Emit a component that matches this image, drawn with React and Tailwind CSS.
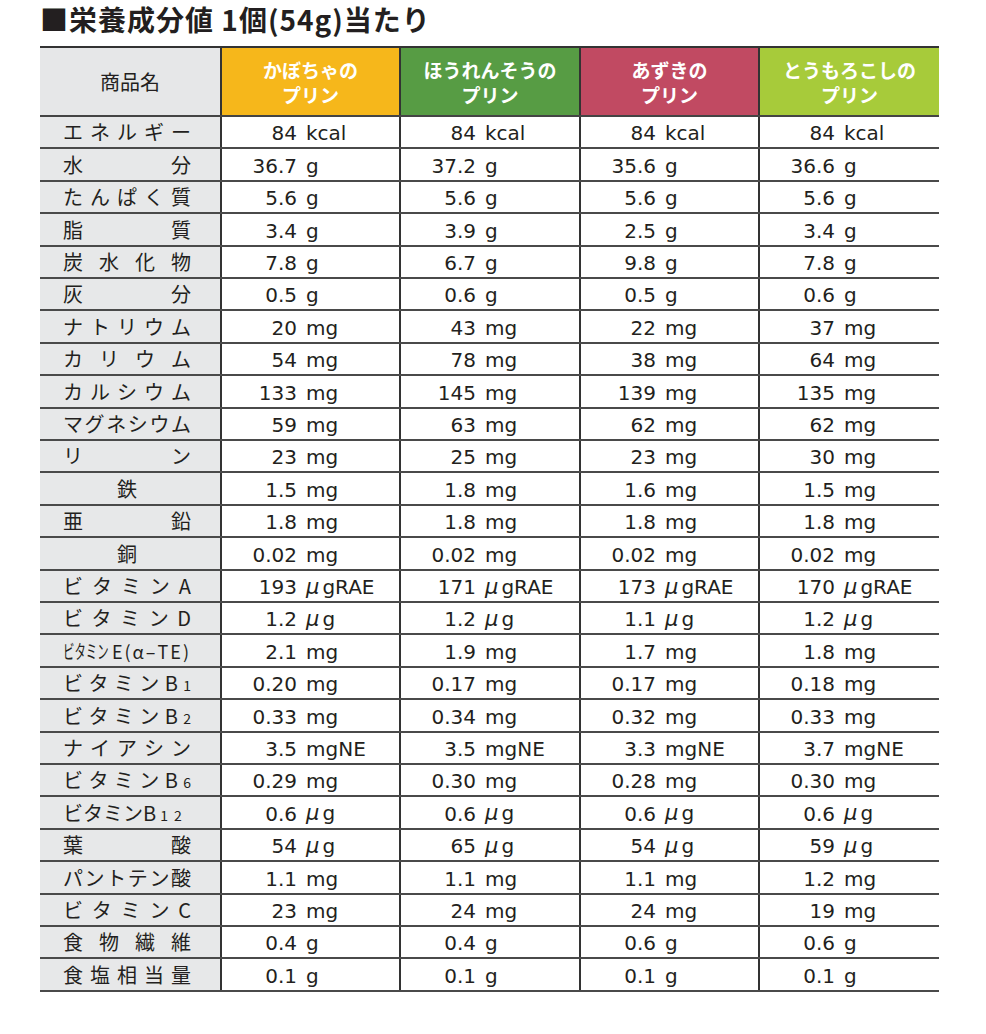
import React from 'react';

const products = [
  { name: ['かぼちゃの', 'プリン'], color: 'bg-[#f6b71b]' },
  { name: ['ほうれんそうの', 'プリン'], color: 'bg-[#579c44]' },
  { name: ['あずきの', 'プリン'], color: 'bg-[#c14a62]' },
  { name: ['とうもろこしの', 'プリン'], color: 'bg-[#a7cb3a]' },
];

const U = 'μg';

// label: array = spread across cell, string = centered, 'vitE' / 'vitB12' = special
const rows = [
  { label: ['エ', 'ネ', 'ル', 'ギ', 'ー'], unit: 'kcal', v: ['84', '84', '84', '84'] },
  { label: ['水', '分'], unit: 'g', v: ['36.7', '37.2', '35.6', '36.6'] },
  { label: ['た', 'ん', 'ぱ', 'く', '質'], unit: 'g', v: ['5.6', '5.6', '5.6', '5.6'] },
  { label: ['脂', '質'], unit: 'g', v: ['3.4', '3.9', '2.5', '3.4'] },
  { label: ['炭', '水', '化', '物'], unit: 'g', v: ['7.8', '6.7', '9.8', '7.8'] },
  { label: ['灰', '分'], unit: 'g', v: ['0.5', '0.6', '0.5', '0.6'] },
  { label: ['ナ', 'ト', 'リ', 'ウ', 'ム'], unit: 'mg', v: ['20', '43', '22', '37'] },
  { label: ['カ', 'リ', 'ウ', 'ム'], unit: 'mg', v: ['54', '78', '38', '64'] },
  { label: ['カ', 'ル', 'シ', 'ウ', 'ム'], unit: 'mg', v: ['133', '145', '139', '135'] },
  { label: ['マ', 'グ', 'ネ', 'シ', 'ウ', 'ム'], unit: 'mg', v: ['59', '63', '62', '62'] },
  { label: ['リ', 'ン'], unit: 'mg', v: ['23', '25', '23', '30'] },
  { label: '鉄', unit: 'mg', v: ['1.5', '1.8', '1.6', '1.5'] },
  { label: ['亜', '鉛'], unit: 'mg', v: ['1.8', '1.8', '1.8', '1.8'] },
  { label: '銅', unit: 'mg', v: ['0.02', '0.02', '0.02', '0.02'] },
  { label: ['ビ', 'タ', 'ミ', 'ン', 'A'], unit: U + 'RAE', v: ['193', '171', '173', '170'] },
  { label: ['ビ', 'タ', 'ミ', 'ン', 'D'], unit: U, v: ['1.2', '1.2', '1.1', '1.2'] },
  { label: 'vitE', unit: 'mg', v: ['2.1', '1.9', '1.7', '1.8'] },
  { label: ['ビ', 'タ', 'ミ', 'ン', 'B', 'sub1'], unit: 'mg', v: ['0.20', '0.17', '0.17', '0.18'] },
  { label: ['ビ', 'タ', 'ミ', 'ン', 'B', 'sub2'], unit: 'mg', v: ['0.33', '0.34', '0.32', '0.33'] },
  { label: ['ナ', 'イ', 'ア', 'シ', 'ン'], unit: 'mgNE', v: ['3.5', '3.5', '3.3', '3.7'] },
  { label: ['ビ', 'タ', 'ミ', 'ン', 'B', 'sub6'], unit: 'mg', v: ['0.29', '0.30', '0.28', '0.30'] },
  { label: 'vitB12', unit: U, v: ['0.6', '0.6', '0.6', '0.6'] },
  { label: ['葉', '酸'], unit: U, v: ['54', '65', '54', '59'] },
  { label: ['パ', 'ン', 'ト', 'テ', 'ン', '酸'], unit: 'mg', v: ['1.1', '1.1', '1.1', '1.2'] },
  { label: ['ビ', 'タ', 'ミ', 'ン', 'C'], unit: 'mg', v: ['23', '24', '24', '19'] },
  { label: ['食', '物', '繊', '維'], unit: 'g', v: ['0.4', '0.4', '0.6', '0.6'] },
  { label: ['食', '塩', '相', '当', '量'], unit: 'g', v: ['0.1', '0.1', '0.1', '0.1'] },
];

function Unit({ unit }) {
  if (unit.startsWith('μ')) {
    return (
      <span>
        <i className="mr-[3px] text-[21px]">μ</i>
        {unit.slice(1)}
      </span>
    );
  }
  return <span>{unit}</span>;
}

function Label({ label }) {
  if (label === 'vitE') {
    return (
      <div className="flex items-center justify-between h-full pl-[23px] pr-[29px]">
        <span className="inline-block w-[46px]">
          <span className="inline-block origin-left scale-x-[0.6] whitespace-nowrap text-[19px]">ビタミン</span>
        </span>
        <span className="text-[18px] tracking-[2px]">E(α–TE)</span>
      </div>
    );
  }
  if (label === 'vitB12') {
    return (
      <div className="flex items-center h-full pl-[23px] pr-[29px]">
        <span>ビタミンB</span>
        <span className="text-[14px] tracking-[6px] ml-[4px] mt-[4px]">12</span>
      </div>
    );
  }
  if (typeof label === 'string') {
    return <div className="flex items-center justify-center h-full pl-[23px] pr-[29px]">{label}</div>;
  }
  return (
    <div className="flex items-center justify-between h-full pl-[23px] pr-[29px]">
      {label.map((c, i) =>
        c.startsWith('sub') ? (
          <span key={i} className="text-[14px] mt-[4px]">{c.slice(3)}</span>
        ) : (
          <span key={i}>{c}</span>
        )
      )}
    </div>
  );
}

export default function App() {
  return (
    <div className="w-[986px] h-[1034px] bg-white pl-[40px] text-[#231f20] font-['Noto_Sans_CJK_JP',sans-serif]">
      {/* title */}
      <div className="h-[38px] leading-[38px] mb-[8px] text-[28px] font-bold tracking-[1px]">
        ■栄養成分値 1個(54g)当たり
      </div>

      <div className="w-[899px] border-t-2 border-[#333]">
        {/* header */}
        <div className="grid grid-cols-[180px_179px_180px_179px_181px] h-[69px] border-b-2 border-[#444]">
          <div className="bg-[#e6e7e8] flex items-center justify-center text-[20px]">商品名</div>
          {products.map((p, i) => (
            <div
              key={i}
              className={`${p.color} border-l-2 border-[#333] flex flex-col items-center justify-center text-white font-bold text-[19px] leading-[25px]`}
            >
              <span>{p.name[0]}</span>
              <span>{p.name[1]}</span>
            </div>
          ))}
        </div>

        {/* rows: 32/33px so 27 rows fill 875px */}
        {rows.map((r, ri) => (
          <div
            key={ri}
            className={`grid grid-cols-[180px_179px_180px_179px_181px] overflow-hidden border-b-2 border-[#4a4a4a] ${
              ri % 5 === 1 || ri % 5 === 3 ? 'h-[33px]' : 'h-[32px]'
            }`}
          >
            <div className="bg-[#e7e8e9] text-[20px] leading-none">
              <Label label={r.label} />
            </div>
            {r.v.map((val, vi) => (
              <div
                key={vi}
                className="border-l-2 border-[#333] flex items-center pt-[2px] text-[20px] leading-none font-['DejaVu_Sans',sans-serif] whitespace-nowrap"
              >
                <span className="w-[75px] text-right">{val}</span>
                <span className="ml-[9px]">
                  <Unit unit={r.unit} />
                </span>
              </div>
            ))}
          </div>
        ))}
      </div>
    </div>
  );
}
